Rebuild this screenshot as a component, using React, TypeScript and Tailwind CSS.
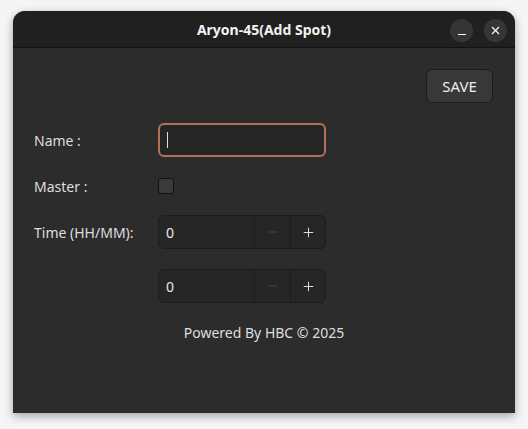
import { Minus, Plus, X } from 'lucide-react'

function SpinRow({ label }: { label?: string }) {
  return (
    <div className="flex h-[34px] items-center">
      <div className="w-[124px] text-[14px] text-[#dedede]">{label}</div>
      <div className="flex h-[34px] w-[168px] overflow-hidden rounded-[6px] border border-[#1c1c1c] bg-[#262626]">
        <div className="flex flex-1 items-center pl-[7px] text-[14px] text-[#e8e8e8]">0</div>
        <div className="flex w-[36px] items-center justify-center border-l border-[#1e1e1e] text-[#4a4a4a]">
          <Minus size={14} strokeWidth={1.5} />
        </div>
        <div className="flex w-[35px] items-center justify-center border-l border-[#1e1e1e] text-[#e8e8e8]">
          <Plus size={15} strokeWidth={1.5} />
        </div>
      </div>
    </div>
  )
}

export default function App() {
  return (
    <div
      className="flex h-[429px] w-[528px] items-start bg-[#f5f5f5] pl-[13px] pt-[11px]"
      style={{ fontFamily: '"Noto Sans", "Open Sans", sans-serif' }}
    >
      <div className="flex h-[402px] w-[502px] flex-col overflow-hidden rounded-t-[12px] bg-[#2c2c2c] shadow-[0_3px_10px_rgba(0,0,0,0.35)]">
        <div className="relative flex h-[37px] items-center justify-center border-b border-[#121212] bg-[#202020]">
          <span className="text-[14px] font-bold text-[#f2f2f2]">Aryon-45(Add Spot)</span>
          <div className="absolute right-[8px] top-[8px] flex gap-[11px]">
            <div className="flex h-[23px] w-[23px] items-end justify-center rounded-full bg-[#353535] pb-[7px]">
              <div className="h-[1.5px] w-[8px] bg-white" />
            </div>
            <div className="flex h-[23px] w-[23px] items-center justify-center rounded-full bg-[#353535] text-white">
              <X size={13} strokeWidth={2} />
            </div>
          </div>
        </div>

        <div className="flex flex-col px-[21px] pt-[21px]">
          <div className="flex justify-end pr-[1px]">
            <div className="flex h-[34px] w-[67px] items-center justify-center rounded-[6px] border border-[#1c1c1c] bg-[#383838] text-[15px] text-[#ececec]">
              SAVE
            </div>
          </div>

          <div className="mt-[20px] flex h-[34px] items-center">
            <div className="w-[124px] text-[14px] text-[#dedede]">Name :</div>
            <div className="flex h-[34px] w-[168px] items-center rounded-[6px] border-2 border-[#b56f57] bg-[#262626] pl-[7px]">
              <div className="h-[16px] w-px bg-[#e0e0e0]" />
            </div>
          </div>

          <div className="mt-[12px] flex h-[34px] items-center">
            <div className="w-[124px] text-[14px] text-[#dedede]">Master :</div>
            <div className="h-[16px] w-[16px] rounded-[3px] border border-[#111] bg-[#3a3a3a]" />
          </div>

          <div className="mt-[12px]">
            <SpinRow label="Time (HH/MM):" />
          </div>
          <div className="mt-[20px]">
            <SpinRow />
          </div>

          <div className="mt-[19px] text-center text-[14px] text-[#dedede]">Powered By HBC © 2025</div>
        </div>
      </div>
    </div>
  )
}
